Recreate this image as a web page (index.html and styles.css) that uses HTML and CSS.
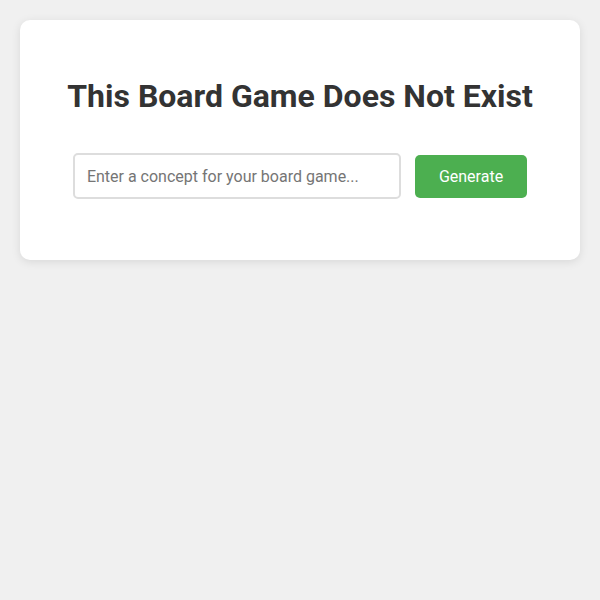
FILE: index.html
```html
<!DOCTYPE html>
<html>
<head>
<meta charset="utf-8">
<link rel="stylesheet" href="styles.css">
</head>
<body>
<div class="card">
  <h1 class="title">This Board Game Does Not Exist</h1>
  <div class="form">
    <input class="concept" type="text" placeholder="Enter a concept for your board game...">
    <button class="generate">Generate</button>
  </div>
</div>
</body>
</html>
```
FILE: styles.css
```css
html, body {
  margin: 0;
  padding: 0;
}
body {
  background: #f0f0f0;
  font-family: Roboto, "Liberation Sans", sans-serif;
  padding: 20px;
}
.card {
  background: #fff;
  border-radius: 10px;
  box-shadow: 0 2px 10px rgba(0, 0, 0, 0.1);
  padding: 40px;
  text-align: center;
}
.title {
  font-size: 32px;
  line-height: 38px;
  font-weight: 700;
  color: #333;
  margin: 17px 0 38px;
}
.form {
  display: flex;
  justify-content: center;
  align-items: center;
  gap: 14px;
  margin-bottom: 21px;
}
.concept {
  box-sizing: border-box;
  width: 328px;
  height: 46px;
  padding: 0 12px;
  font-size: 16px;
  font-family: Roboto, "Liberation Sans", sans-serif;
  border: 2px solid #ddd;
  border-radius: 5px;
  color: #333;
  outline: none;
}
.concept::placeholder {
  color: #757575;
}
.generate {
  height: 43px;
  padding: 0 24px;
  font-size: 16px;
  font-family: Roboto, "Liberation Sans", sans-serif;
  background: #4caf50;
  color: #fff;
  border: none;
  border-radius: 5px;
  cursor: pointer;
}
```
